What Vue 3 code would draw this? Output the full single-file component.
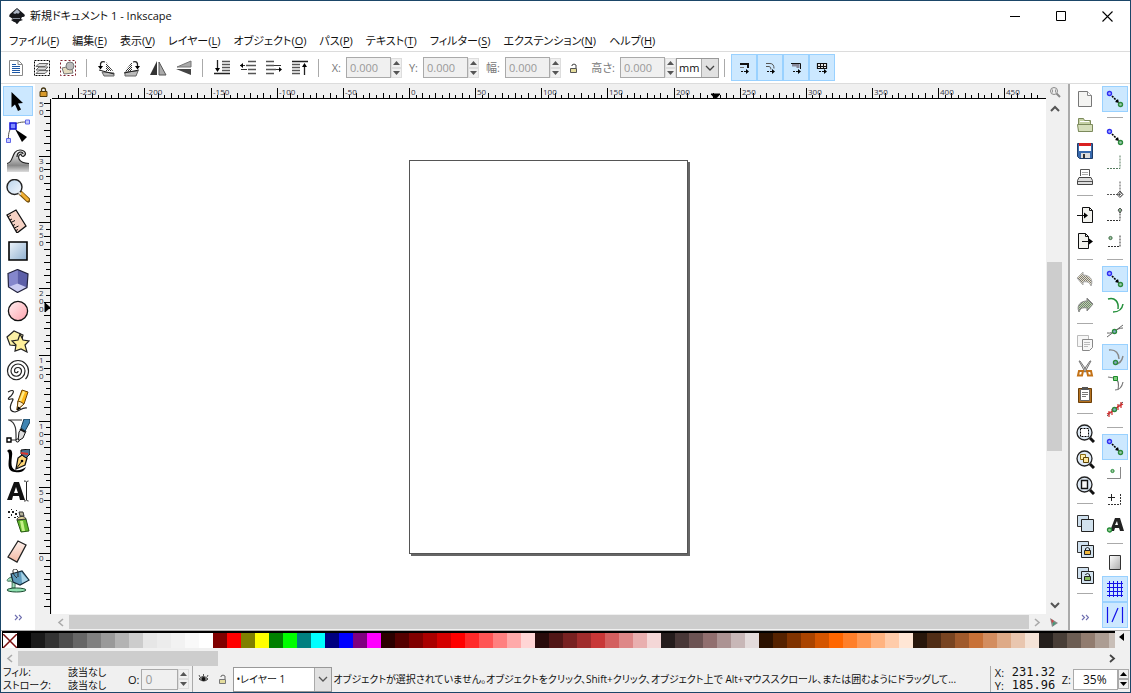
<script setup>
import { ref } from 'vue'

const menus = [
  ['ファイル', 'F'], ['編集', 'E'], ['表示', 'V'], ['レイヤー', 'L'], ['オブジェクト', 'O'],
  ['パス', 'P'], ['テキスト', 'T'], ['フィルター', 'S'], ['エクステンション', 'N'], ['ヘルプ', 'H']
]

// Shapes shared by several icons
const lens = '<path d="M15 15l4 4" stroke="#111" stroke-width="3"/><circle cx="9.5" cy="9.5" r="7.5" fill="#dfeaf5" stroke="#222" stroke-width="1.3"/>'
const twoPanes = '<path d="M2.5 2.5h11v11h-11z" fill="#cfe0ee" stroke="#333"/><path d="M6.5 6.5h12v12h-12z" fill="#d2e2ee" stroke="#222"/>'
const toggleArrow = '<path d="M6 12.5h2m1 0h3" stroke="#111"/><path d="M11 10l3 2.5-3 2.5z"/>'

const icons = {
  selector: '<path d="M5.5 3v15.5l3.5-3 3 6.5 3-1.5-3-6 5-.5z"/>',
  node: '<path d="M2.5 20C2 14 4 9 7 7c4-4 9-4 14-4" fill="none" stroke="#555"/><path d="M9 10l12 8-5 5z"/><path d="M4 4h6v6H4z" fill="#7f8cff" stroke="#1010d8" stroke-width="1.5"/><path d="M19.5 1h4v4h-4zM.5 19.5h4v4h-4z" fill="#c3c9ff" stroke="#6066e8"/>',
  tweak: '<path d="M1 15C8 15 5 1 14 1c6 0 7 4 4 6-1.5 1-3 0-3-2-4 1-3 10 8 10v8H1z" fill="url(#grayGrad)"/><path d="M1 14.5C8 14.5 5 1 14 1c5 0 7 4 4 6-1.5 1-3 0-3-2-4 1-4 9 8 9.5M11 8c0-6 6-6 6-3" fill="none" stroke="#222" stroke-width="1.2"/>',
  zoom: '<path d="M15 14.5l7 6.5" stroke="#7a5410" stroke-width="5" stroke-linecap="round"/><path d="M15.5 14.5l6 6" stroke="#f2b032" stroke-width="3" stroke-linecap="round"/><circle cx="8.5" cy="8" r="7.5" fill="url(#glass)" stroke="#222" stroke-width="1.4"/><path d="M12.5 13l2.5 2.5" stroke="#ddd" stroke-width="2"/>',
  measure: '<path d="M1 6l9-5 10 16-9 7z" fill="#f6d2c4" stroke="#111" stroke-width="1.3"/><path d="M2 8l3-2M4 11l2-1M5 13.5l4-2M7 16.5l2-1M8.5 19l4-2M10 21.5l2-1" stroke="#111"/>',
  rect: '<path d="M3 3h18v18H3z" fill="url(#blueGrad)" stroke="#000" stroke-width="1.6"/>',
  cube: '<path d="M2 4.5l9.5-4L22 5l-1 13.500-9.500 5L2.500 18z" fill="#c9cbf2"/><path d="M2 4.5l9.500-4v14l-9 3.500z" fill="#8487cc"/><path d="M11.500.5L22 5l-1 13.500-9.500-4z" fill="#5c5fa8"/><path d="M2 4.500l9.500-4L22 5l-1 13.500-9.500 5L2.500 18z" fill="none" stroke="#23243f" stroke-width="1.200"/>',
  ellipse: '<circle cx="12" cy="12" r="9.6" fill="url(#pinkGrad)" stroke="#111" stroke-width="1.3"/>',
  star: '<path d="M1 8l7-6 9 4-3 11-10-1z" fill="#fbf0a6" stroke="#222" stroke-width="1.2"/><path d="M14 5l3 6 6 1-4 4 2 7-6-3-6 2 1-6-4-4 6-1z" fill="#fff09a" stroke="#222" stroke-width="1.2"/>',
  spiral: '<path d="M12 12a1.75 1.75 0 0 1-3.5 0a3.5 3.5 0 0 1 7 0a5.25 5.25 0 0 1-10.5 0a7 7 0 0 1 14 0a8.75 8.75 0 0 1-17.5 0a10.5 10.5 0 0 1 21 0q0 5-3 8" fill="none" stroke="#222" stroke-width="1.2"/>',
  pencil: '<path d="M2 3c6-3 7-1 3 4-4 3-3 4 0 3 4-1 1 2 0 5-2 5 0 8 4 8 5-1 7-5 12-4" fill="none" stroke="#222" stroke-width="1.2"/><path d="M12 12L16 1l6 2-4 12-7 6z" fill="#ffb818" stroke="#6d4300"/><path d="M17 2l2 1-4 10-2-1z" fill="#ffec8a"/><path d="M12 12l3 1 3 2-7 6z" fill="#fff0cf" stroke="#6d4300"/><path d="M11 21.500l1-4 3 2z"/>',
  bezier: '<path d="M2 1h14M3 1c8 3 7 12 7 20H3" fill="none" stroke="#333" stroke-width="1.2"/><path d="M12 22l1-9 3-4 4 3-3 7z" fill="#ddd" stroke="#111"/><path d="M15 9l3-9h6v3l-5 9z" fill="#3f84b2" stroke="#173a52"/><path d="M14 10l5 3" stroke="#111" stroke-width="2"/><path d="M1 19h4v4H1z" fill="#fff" stroke="#000" stroke-width="1.4"/><circle cx="11.5" cy="21.5" r="1.5" fill="#fff" stroke="#000"/>',
  calligraphy: '<path d="M1 2c3-3 6-1 5 5-1 8-1 12 3 14 4 1 8-1 11-3-2 5-7 6-11 5-7-1-7-6-6-14 0-4 0-6-2-7z"/><path d="M10 20l2-11 4-3 5 3-2 7z" fill="#ffd777" stroke="#111" stroke-width="1.3"/><path d="M10 20l6-8" stroke="#111"/><circle cx="16" cy="12" r="1.3"/><path d="M15 1l9-1v5l-4 4-5-4z" fill="#4a7393" stroke="#111"/><path d="M15 4l7 1" stroke="#d9362d" stroke-width="2"/>',
  text: '<path d="M1 21L8 3h5l6 18h-5l-1-4H7l-1 4zM8 14h4l-2-6z" fill-rule="evenodd" fill="#111"/><path d="M18 2q2 0 2.5 1q.5-1 2-1M20.5 3v18M18 22q2 0 2.5-1q.5 1 2 1" fill="none" stroke="#222"/>',
  spray: '<path d="M11 11l9-1 3 12-8 1z" fill="#62b82e" stroke="#275a12"/><path d="M14 12h3l2 10h-3z" fill="#c5f088"/><path d="M11 11c0-4 8-5 9-1z" fill="#e1d39a" stroke="#333"/><path d="M13 3h4l1 4h-4z" fill="#b7b49b" stroke="#333"/><path d="M2 2h2v2H2zM5 5h1v2H5zM6 2h2v2H6zM9 4h2v2H9zM2 8h2v1H2zM8 8h2v1H8zM5 0h1v1H5zM10 1h1v1h-1zM11 7h1v1h-1z" fill="#222"/>',
  eraser: '<path d="M2 18L12 2l8 4-9 17z" fill="url(#peach)" stroke="#222" stroke-width="1.3"/>',
  bucket: '<path d="M5 8c-6 3-4 5-1 4 3 0 2 3 2 7h3c0-5 1-8-2-9z" fill="#9fdcbb" stroke="#3d6d54"/><path d="M5 5l11-3 7 9-9 5-7-3z" fill="#5e9abb" stroke="#172b38" stroke-width="1.2"/><path d="M15 3l7 8-6 3z" fill="#a8d3e7"/><path d="M11 9C6 5 6 0 9 0s3 3 3 8" fill="none" stroke="#222"/><ellipse cx="10.5" cy="21" rx="9.5" ry="2" fill="#8fe0b0" stroke="#1c4931"/>',

  selectAll: '<path d="M2.5 1.5h9l4 4v11h-13z" fill="#fff" stroke="#888"/><path d="M11 1.5v4h4" fill="none" stroke="#888"/><path d="M5 5.5h4M5 7.5h8M5 9.5h8M5 11.5h8M5 13.5h8" stroke="#1c57a5"/>',
  selectLayers: '<path d="M1.5 1.5h15v15h-15z" fill="none" stroke="#000" stroke-dasharray="2 1"/><path d="M6 11.5h9l-3 3H3zM6 8h9l-3 3H3zM6 4.500h9l-3 3H3z" fill="#ddd" stroke="#666"/>',
  deselect: '<path d="M1.5 1.5h15v15h-15z" fill="none" stroke="#7d1f2b" stroke-dasharray="2 2"/><path d="M3 9l9-2 2 7-9 1z" fill="#e5dcc0" stroke="#777"/><circle cx="11" cy="7" r="4" fill="#bbb" stroke="#777"/>',
  rotateLeft: '<path d="M9 3v9h7z" fill="url(#dither)"/><path d="M5 13l12 1v3H7z" fill="#bbb" stroke="#666"/><path d="M1 7h5l-2.5 3.5z"/><path d="M3.5 7C3 3 5 2 8 3" fill="none" stroke="#222" stroke-width="1.3"/><path d="M2 11l15 4" stroke="#222"/>',
  rotateRight: '<path d="M9 3v9H2z" fill="url(#dither)"/><path d="M2 13l13-1-2 5H2z" fill="#bbb" stroke="#666"/><path d="M12 7h5l-2.5 3.5z"/><path d="M10 3c3-1 5 0 4.5 4" fill="none" stroke="#222" stroke-width="1.3"/><path d="M1 14l15-3" stroke="#222"/>',
  flipH: '<path d="M8 2v14H1z" fill="#333"/><path d="M10 3v13h7z" fill="#aaa" stroke="#555"/>',
  flipV: '<path d="M2 8h14V2z" fill="#aaa" stroke="#777"/><path d="M1 10h15v6z" fill="#444"/>',
  bottom: '<path d="M4.5 1v10M1 14.5h16" stroke="#222" stroke-width="1.3"/><path d="M2 9h5l-2.5 4z"/><path d="M9 2.500h8M9 5.500h8M9 8.500h8M9 11.500h8" stroke="#555" stroke-width="1.5"/>',
  lower: '<path d="M9 2.5h8M7 6.5h10M9 10.5h8M9 14.5h8" stroke="#555" stroke-width="1.5"/><path d="M1 6.5h5M2 10.5h6" stroke="#333"/><path d="M4 4v5L1 6.5z"/>',
  raise: '<path d="M1 2.5h8M1 6.5h8M1 10.5h10M1 14.5h8" stroke="#555" stroke-width="1.5"/><path d="M9 6.5h7M11 10.5h5" stroke="#333"/><path d="M14 8v5l3-2.5z"/>',
  top: '<path d="M1 2.5h16M13.5 6v10" stroke="#222" stroke-width="1.3"/><path d="M11 8h5l-2.5-4z"/><path d="M1 5.5h8M1 8.5h8M1 11.5h8M1 14.5h8" stroke="#555" stroke-width="1.5"/>',
  scaleStroke: '<path d="M5 5h8v4" fill="none" stroke="#111" stroke-width="2"/><path d="M5 8.5h4" stroke="#777"/>' + toggleArrow,
  scaleCorner: '<path d="M5 4.5h4q4 0 4 5M5 7.5h3q2 0 2 3" fill="none" stroke="#555"/>' + toggleArrow,
  moveGradient: '<path d="M5 6h6v3" fill="none" stroke="#889" stroke-width="3"/><path d="M4 4.5h9.5V10" fill="none" stroke="#111"/>' + toggleArrow,
  movePattern: '<path d="M4.5 4.5h9v5h-9zM4 7.5h9M7.5 4v5M10.5 4v5" fill="#fff" stroke="#111" stroke-width="1.2"/>' + toggleArrow,

  docNew: '<path d="M3.5 2.5h9l4 4v11h-13z" fill="#f4f4f2" stroke="#777"/><path d="M12.5 2.5v4h4" fill="#fff" stroke="#888"/>',
  open: '<path d="M3.5 16.5v-13h5l1 2h6v11z" fill="#c5d1a4" stroke="#7c8a5c"/><path d="M5 6.5h9" stroke="#fff"/><path d="M2.500 9.500h15v7h-14z" fill="#d6dfbb" stroke="#7c8a5c"/>',
  save: '<path d="M2.5 2.5h15v15h-13l-2-2z" fill="#3769ad" stroke="#1e3c68"/><path d="M4 2h12v3H4z" fill="#d92020"/><path d="M4 5h12v5H4z" fill="#fff"/><path d="M6 12h9v5H6z" fill="#ddd"/><path d="M8 13h2v4H8z" fill="#333"/>',
  print: '<path d="M5.5 9V2.500h9V9" fill="#fff" stroke="#555"/><path d="M7 5.500h6M7 7.500h6" stroke="#aaa"/><path d="M4 10.500h12l1.500 3v4h-15v-4z" fill="#ddd" stroke="#444"/><path d="M3 14.500h14" stroke="#555"/>',
  importFile: '<path d="M7.5 2.5h7l3 3v12h-10z" fill="#f2f2ee" stroke="#111"/><path d="M14.5 2.5v3h3M2 10.5h8" fill="none" stroke="#111"/><path d="M9 7.5l4 3-4 3z"/>',
  exportFile: '<path d="M3.5 2.5h7l3 3v12h-10z" fill="#f2f2ee" stroke="#111"/><path d="M10.5 2.5v3h3M7 10.5h8" fill="none" stroke="#111"/><path d="M14 7.5l4 3-4 3z"/>',
  undo: '<path d="M2 9l6-6v3c6 0 11 4 8 11-1-3-3-5-8-4v3z" fill="#eae2c8"/><path d="M2 9l6-6v3c6 0 11 4 8 11-1-3-3-5-8-4v3z" fill="url(#ditherSoft)" stroke="#aaa"/>',
  redo: '<path d="M18 9l-6-6v3C6 6 1 10 4 17c1-3 3-5 8-4v3z" fill="#b9dda8"/><path d="M18 9l-6-6v3C6 6 1 10 4 17c1-3 3-5 8-4v3z" fill="url(#ditherSoft)" stroke="#888"/>',
  copy: '<path d="M2.5 2.5h11v11h-11z" fill="#f7f7f7" stroke="#bbb"/><path d="M7.5 6.5h10v8l-3 3h-7z" fill="#f7f7f7" stroke="#888"/><path d="M9 9.5h6M9 11.5h6M9 13.5h4" stroke="#bbb"/>',
  cut: '<path d="M4 2l1 0 7 10-2 1zM16 2l-1 0-7 10 2 1z" fill="#ddd" stroke="#777"/><path d="M4 12h4l-1 4.500H3zM12 12h4l1 4.500h-4z" fill="#fff" stroke="#c37217" stroke-width="2"/>',
  paste: '<path d="M3.5 3.5h13v14h-13z" fill="#b4711f" stroke="#6b3e08"/><path d="M5.5 4.5h9v11h-9z" fill="#fff" stroke="#666"/><path d="M7 2h6v3H7z" fill="#555"/><path d="M7 7.5h6M7 9.5h6M7 11.5h4" stroke="#777"/>',
  zoomSelection: lens + '<path d="M5.5 5.5h8v8h-8z" fill="#fff" stroke="#000" stroke-dasharray="2 1"/>',
  zoomDrawing: lens + '<path d="M5.500 5.500h5v5h-5z" fill="#fff0b0" stroke="#8a6a10"/><path d="M8.500 8.500h5v5h-5z" fill="#ffe69a" stroke="#5d4304"/>',
  zoomPage: lens + '<path d="M6.5 5.5h6v8h-6z" fill="#f6f6f6" stroke="#111" stroke-width="1.4"/>',
  duplicate: twoPanes,
  clone: twoPanes + '<path d="M10.500 12V9.500q2-2 4 0V12" fill="none" stroke="#222"/><path d="M9.500 11.500h6v4h-6z" fill="#f1b83c" stroke="#222"/>',
  unlink: twoPanes + '<path d="M10.5 10V9.500q2-2 4 0V12" fill="none" stroke="#222"/><path d="M9.500 11.500h6v4h-6z" fill="#86bb5a" stroke="#222"/>',

  snap: '<path d="M7 7l6 6" stroke="#000" stroke-width="1.6" stroke-dasharray="2 1"/><path d="M14 14l-4-1 3-3z"/><circle cx="4.5" cy="4.5" r="2" fill="#aab0ff" stroke="#3030f0" stroke-width="1.4"/><circle cx="15.5" cy="15.5" r="2" fill="#9ccbb0" stroke="#2c8a3c" stroke-width="1.4"/>',
  bboxSnap: '<path d="M2 15.5h13V2" fill="none" stroke="#567a5e" stroke-dasharray="2 1"/>',
  bboxEdge: '<path d="M2 15.5h13V2" fill="none" stroke="#555" stroke-dasharray="2 1"/><path d="M15 12l3 3.500-3 3-3-3z" fill="url(#ditherSoft)" stroke="#555"/>',
  bboxCorner: '<path d="M2 15.5h13V6" fill="none" stroke="#333" stroke-dasharray="2 1"/><path d="M15 3l2 2-2 3-2-3z" fill="#8bb391" stroke="#555"/>',
  bboxMid: '<path d="M3 15.5h12V4" fill="none" stroke="#333" stroke-dasharray="2 1"/><circle cx="5.5" cy="7" r="1.600" fill="#9cc5a0" stroke="#3c6a44"/>',
  pathSnap: '<path d="M3 4c7-2 11 3 10 10M18 9c-1 6-5 8-10 8" fill="none" stroke="#23903a" stroke-width="1.5"/>',
  intersect: '<path d="M2 16L18 4M2 12c7 1 9-5 16-5" fill="none" stroke="#666"/><circle cx="9.5" cy="10.5" r="2" fill="#8ac" stroke="#2c8a3c" stroke-width="1.4"/>',
  cusp: '<path d="M4 3c7-1 10 4 10 9M18 9c-1 5-4 8-8 8" fill="none" stroke="#888" stroke-width="1.4"/><circle cx="10.500" cy="15.500" r="2" fill="#8ac" stroke="#2c8a3c" stroke-width="1.400"/>',
  smooth: '<path d="M3 4l6 1c5 2 5 6 4 12M18 9c-1 5-4 8-8 8" fill="none" stroke="#777" stroke-width="1.2"/><path d="M8.500 3.500h4v4h-4z" fill="#7ccb7c" stroke="#1d8a2c"/>',
  midpoint: '<path d="M2 17L18 3" stroke="#555"/><path d="M4 12v6M7 10v6M13 5v6M16 3v6M2 15l6-3M11 9l7-4" stroke="#d32a2a" stroke-width="1.2"/><circle cx="9.5" cy="10.5" r="2" fill="#8ac" stroke="#2c8a3c" stroke-width="1.4"/>',
  objectCenter: '<path d="M2 15.500h13.500V4" fill="none" stroke="#888"/><circle cx="7.500" cy="8" r="1.600" fill="#9cc5a0" stroke="#238a35"/>',
  rotation: '<path d="M3 15.5h12.500V4" fill="none" stroke="#333" stroke-dasharray="2 1"/><path d="M6.500 5v7M3 8.500h7" stroke="#222"/>',
  textBase: '<path d="M5 16L10 3h5l4 13h-4l-1-3h-4l-1 3zM10 10h3l-1-4z" fill-rule="evenodd" fill="#222"/><circle cx="4.5" cy="15" r="2" fill="#9ad19a" stroke="#238a35" stroke-width="1.3"/>',
  pageBorder: '<path d="M4.5 2.5h11v14h-11z" fill="url(#grayGrad2)" stroke="#333"/>',
  grid: '<path d="M2 4.500h16M2 8.500h16M2 12.500h16M2 16.500h16M4.500 2v16M8.500 2v16M12.500 2v16M16.500 2v16" stroke="#1212e8"/>',
  guide: '<path d="M2.5 2v16M17.5 2v16M7 17l6-14" stroke="#1212e8" stroke-width="1.2"/>'
}

const tools = [
  ['selector', '選択'], ['node', 'ノード'], ['tweak', '微調整'], ['zoom', 'ズーム'], ['measure', '計測'],
  ['rect', '矩形'], ['cube', '3D ボックス'], ['ellipse', '円/弧'], ['star', '星形'], ['spiral', 'らせん'],
  ['pencil', '鉛筆'], ['bezier', 'ペン'], ['calligraphy', 'カリグラフィ'], ['text', 'テキスト'],
  ['spray', 'スプレー'], ['eraser', '消しゴム'], ['bucket', 'バケツ']
]
const activeTool = ref('selector')

const actions = [
  ['selectAll', 'selectLayers', 'deselect'],
  ['rotateLeft', 'rotateRight', 'flipH', 'flipV'],
  ['bottom', 'lower', 'raise', 'top']
]
const toggles = ['scaleStroke', 'scaleCorner', 'moveGradient', 'movePattern']

const commands = [
  ['docNew', 'open', 'save', 'print'], ['importFile', 'exportFile'], ['undo', 'redo'],
  ['copy', 'cut', 'paste'], ['zoomSelection', 'zoomDrawing', 'zoomPage'], ['duplicate', 'clone', 'unlink']
]
const snaps = [
  [['snap', 1]],
  [['snap'], ['bboxSnap'], ['bboxEdge'], ['bboxCorner'], ['bboxMid']],
  [['snap', 1], ['pathSnap'], ['intersect'], ['cusp', 1], ['smooth'], ['midpoint']],
  [['snap', 1], ['objectCenter'], ['rotation'], ['textBase']],
  [['pageBorder'], ['grid', 1], ['guide', 1]]
]

const swatches = (
  '000000 1a1a1a 333333 4d4d4d 666666 808080 999999 b3b3b3 cccccc e6e6e6 ececec f2f2f2 f9f9f9 ffffff ' +
  '800000 ff0000 808000 ffff00 008000 00ff00 008080 00ffff 000080 0000ff 800080 ff00ff ' +
  '2b0000 550000 800000 aa0000 d40000 ff0000 ff2a2a ff5555 ff8080 ffaaaa ffd5d5 ' +
  '280b0b 501616 782121 a02c2c c83737 d35f5f de8787 e9afaf f4d7d7 ' +
  '241c1c 483737 6c5353 916f6f ac9393 c8b7b7 e3dbdb ' +
  '2b1100 552200 803300 aa4400 d45500 ff6600 ff7f2a ff9955 ffb380 ffccaa ffe6d5 ' +
  '28170b 502d16 784421 a05a2c c87137 d38d5f deaa87 e9c6af f4e3d7 ' +
  '241f1c 483e37 6c5d53 917c6f ac9d93 c8beb7'
).split(' ').map(c => '#' + c)

// Rulers: one tick every 5 mm, a label every 50 mm.
const scale = 66.14 / 50
function ticks(from, to, pos) {
  const out = []
  for (let v = from; v <= to; v += 5) {
    out.push({ v, at: Math.round(pos(v)), kind: v % 50 === 0 ? 2 : v % 10 === 0 ? 1 : 0 })
  }
  return out
}
const hTicks = ticks(-265, 475, v => 357 + v * scale)
const vTicks = ticks(-40, 340, v => 454 - v * scale)
const tickLength = [4, 6, 11]

const fields = [['x', 'X:'], ['y', 'Y:'], ['w', '幅:'], ['h', '高さ:']]
</script>

<template>
  <div class="window">
    <svg class="defs" aria-hidden="true">
      <defs>
        <pattern id="dither" width="2" height="2" patternUnits="userSpaceOnUse"><path d="M0 0h1v1H0zM1 1h1v1H1z" fill="#333" /></pattern>
        <pattern id="ditherSoft" width="2" height="2" patternUnits="userSpaceOnUse"><path d="M0 0h1v1H0zM1 1h1v1H1z" fill="#777" /></pattern>
        <linearGradient id="grayGrad" x2="0" y2="1"><stop offset="0" stop-color="#fff" /><stop offset=".7" stop-color="#888" /><stop offset="1" stop-color="#ddd" /></linearGradient>
        <linearGradient id="grayGrad2" x2="1" y2="1"><stop offset="0" stop-color="#fff" /><stop offset="1" stop-color="#aaa" /></linearGradient>
        <linearGradient id="blueGrad" x2="1" y2="1"><stop offset="0" stop-color="#eef4fa" /><stop offset="1" stop-color="#8fb0d0" /></linearGradient>
        <linearGradient id="glass" x2="1" y2="1"><stop offset="0" stop-color="#b9d3ea" /><stop offset="1" stop-color="#f6faff" /></linearGradient>
        <linearGradient id="pinkGrad" x2="1" y2="1"><stop offset="0" stop-color="#fff0f1" /><stop offset="1" stop-color="#ffa3ad" /></linearGradient>
        <linearGradient id="peach" x2="0" y2="1"><stop offset="0" stop-color="#fff3ee" /><stop offset="1" stop-color="#f3b8a2" /></linearGradient>
      </defs>
    </svg>

    <header class="titlebar">
      <svg class="logo" width="16" height="16" viewBox="0 0 16 16" aria-hidden="true">
        <path d="M8 0l7 6c2 2 0 3-2 3l-1 2 2 1-3 1c-1 0-2 3-3 3s-1-2-3-2l-3-2 2-1-3-2C0 9 0 7 1 6z" fill="#16181c" />
        <path d="M8 1l3 3-2 2-1-1-2 1-2-1z" fill="#aeb7c6" />
        <path d="M4 10.500h7" stroke="#8b93a0" />
      </svg>
      <h1>新規ドキュメント 1 - Inkscape</h1>
      <button class="win" aria-label="最小化"><svg width="11" height="11"><path d="M0 5.500h10" stroke="#000" /></svg></button>
      <button class="win" aria-label="最大化"><svg width="11" height="11"><path d="M.5.5h9v9h-9z" fill="none" stroke="#000" /></svg></button>
      <button class="win" aria-label="閉じる"><svg width="11" height="11"><path d="M.5.5l10 10M10.500.5l-10 10" stroke="#000" stroke-width="1.100" /></svg></button>
    </header>

    <nav class="menubar">
      <button v-for="m in menus" :key="m[1]">{{ m[0] }}(<u>{{ m[1] }}</u>)</button>
    </nav>

    <div class="toolbar">
      <template v-for="(group, i) in actions" :key="i">
        <button v-for="a in group" :key="a" class="tool26" :aria-label="a">
          <svg width="18" height="18" viewBox="0 0 18 18" v-html="icons[a]"></svg>
        </button>
        <span class="vsep"></span>
      </template>
      <template v-for="f in fields" :key="f[0]">
        <button v-if="f[0] === 'h'" class="lock" aria-label="縦横比を固定">
          <svg width="10" height="12" viewBox="0 0 10 12"><path d="M3 4V3q2-2 4 0v3" fill="none" stroke="#444" /><path d="M1.500 6.500h6v4h-6z" fill="#e4dc9c" stroke="#555" /></svg>
        </button>
        <label :for="f[0]">{{ f[1] }}</label>
        <span class="spin">
          <input :id="f[0]" value="0.000" disabled>
          <span class="steps">
            <button disabled aria-label="増やす"><svg width="7" height="4"><path d="M0 4l3.500-4L7 4z" /></svg></button>
            <button disabled aria-label="減らす"><svg width="7" height="4"><path d="M0 0l3.500 4L7 0z" /></svg></button>
          </span>
        </span>
      </template>
      <span class="select unit">
        <select aria-label="単位"><option>mm</option></select>
        <svg width="10" height="6"><path d="M1 1l4 4 4-4" fill="none" stroke="#444" stroke-width="1.300" /></svg>
      </span>
      <span class="vsep"></span>
      <button v-for="t in toggles" :key="t" class="tool26 on" :aria-label="t">
        <svg width="18" height="18" viewBox="0 0 18 18" v-html="icons[t]"></svg>
      </button>
    </div>

    <main>
      <aside class="toolbox">
        <button v-for="t in tools" :key="t[0]" :class="{ on: activeTool === t[0] }" :aria-label="t[1]" @click="activeTool = t[0]">
          <svg width="24" height="24" viewBox="0 0 24 24" v-html="icons[t[0]]"></svg>
        </button>
        <button class="more" aria-label="その他のツール"><svg width="8" height="7"><path d="M1 1l2.500 2.500L1 6M5 1l2.500 2.500L5 6" fill="none" stroke="#7070b0" stroke-width="1.200" /></svg></button>
      </aside>

      <section class="editor">
        <button class="corner" aria-label="ガイドをロック">
          <svg width="9" height="10"><path d="M2.500 5V3q0-2 2-2t2 2v2" fill="none" stroke="#443510" stroke-width="1.300" /><path d="M1 4.500h7v5H1z" fill="#d99a2b" stroke="#513b0c" /></svg>
        </button>
        <svg class="hruler">
          <path v-for="t in hTicks" :key="t.v" :d="`M${t.at + 0.5} 15v-${tickLength[t.kind]}`" />
          <path class="axis" d="M0 14.500h4000" />
          <template v-for="t in hTicks" :key="t.v">
            <text v-if="t.kind === 2" :x="t.at + 2" y="11">{{ t.v }}</text>
          </template>
          <path class="marker" d="M659 10h9l-4.500 5z" />
        </svg>
        <div class="top-right"><svg width="12" height="12"><path d="M7 7l4 4" stroke="#888" stroke-width="2" /><circle cx="5" cy="5" r="3.500" fill="#eee" stroke="#888" /><path d="M3.500 3.500v3M6.500 3.500v3" stroke="#999" /></svg></div>

        <svg class="vruler">
          <path v-for="t in vTicks" :key="t.v" :d="`M15 ${t.at + 0.5}h-${tickLength[t.kind]}`" />
          <path class="axis" d="M15.500 0v4000" />
          <template v-for="t in vTicks" :key="t.v">
            <template v-if="t.kind === 2">
              <text v-for="(d, i) in String(t.v)" :key="i" x="4" :y="t.at + 8 + i * 8">{{ d }}</text>
            </template>
          </template>
          <text x="4" y="8">5</text><text x="4" y="16">0</text>
          <path class="marker" d="M10 204v9l5-4.500z" />
        </svg>
        <div class="canvas"><div class="page"></div></div>
        <div class="vscroll">
          <button aria-label="上へ"><svg width="10" height="7"><path d="M1 6l4-4 4 4" fill="none" stroke="#555" stroke-width="2" /></svg></button>
          <span class="gap-a"></span><span class="thumb"></span><span class="gap-b"></span>
          <button aria-label="下へ"><svg width="10" height="7"><path d="M1 1l4 4 4-4" fill="none" stroke="#555" stroke-width="2" /></svg></button>
        </div>

        <div class="corner"></div>
        <div class="hscroll">
          <button aria-label="左へ"><svg width="7" height="9"><path d="M6 1L2 4.500 6 8" fill="none" stroke="#aaa" stroke-width="1.600" /></svg></button>
          <span class="thumb"></span>
          <button aria-label="右へ"><svg width="7" height="9"><path d="M1 1l4 3.500L1 8" fill="none" stroke="#aaa" stroke-width="1.600" /></svg></button>
        </div>
        <div class="cms"><svg width="9" height="9"><path d="M1 0l8 5-6 4z" fill="#888" /><path d="M2 1l3 2-2 2z" fill="#c44" /><path d="M4 4l3 1-3 3z" fill="#497" /></svg></div>
      </section>

      <aside class="side commands">
        <template v-for="(group, i) in commands" :key="i">
          <button v-for="c in group" :key="c" :aria-label="c"><svg width="20" height="20" viewBox="0 0 20 20" v-html="icons[c]"></svg></button>
          <span class="hsep"></span>
        </template>
        <button class="more" aria-label="その他のコマンド"><svg width="8" height="7"><path d="M1 1l2.500 2.500L1 6M5 1l2.500 2.500L5 6" fill="none" stroke="#7070b0" stroke-width="1.200" /></svg></button>
      </aside>
      <aside class="side snaps">
        <template v-for="(group, i) in snaps" :key="i">
          <span v-if="i" class="hsep"></span>
          <button v-for="(s, j) in group" :key="j" :class="{ on: s[1] }" :aria-label="s[0]"><svg width="20" height="20" viewBox="0 0 20 20" v-html="icons[s[0]]"></svg></button>
        </template>
      </aside>
    </main>

    <div class="palette">
      <div class="swatches">
        <button class="none" aria-label="なし"><svg width="14" height="14"><path d="M0 0l14 14M14 0L0 14" stroke="#7a1010" stroke-width="1.500" /></svg></button>
        <button v-for="(c, i) in swatches" :key="i" :style="{ background: c }" :aria-label="c"></button>
      </div>
      <button class="pal-menu" aria-label="パレット"><svg width="5" height="8"><path d="M5 0v8L0 4z" /></svg></button>
    </div>
    <div class="pscroll">
      <button aria-label="左へ"><svg width="7" height="9"><path d="M6 1L2 4.500 6 8" fill="none" stroke="#aaa" stroke-width="1.600" /></svg></button>
      <span class="thumb"></span>
      <button aria-label="右へ"><svg width="7" height="9"><path d="M1 1l4 3.500L1 8" fill="none" stroke="#444" stroke-width="1.800" /></svg></button>
    </div>

    <footer class="status">
      <dl class="style">
        <dt>フィル:</dt><dd>該当なし</dd>
        <dt>ストローク:</dt><dd>該当なし</dd>
      </dl>
      <label for="opacity">O:</label>
      <span class="spin small">
        <input id="opacity" value="0" disabled>
        <span class="steps">
          <button disabled aria-label="増やす"><svg width="7" height="4"><path d="M0 4l3.500-4L7 4z" /></svg></button>
          <button disabled aria-label="減らす"><svg width="7" height="4"><path d="M0 0l3.500 4L7 0z" /></svg></button>
        </span>
      </span>
      <span class="ssep"></span>
      <button class="eye" aria-label="レイヤーの表示"><svg width="11" height="10"><path d="M1 5q4-5 9 0-4 4-9 0z" fill="#999" stroke="#444" /><circle cx="5.500" cy="5" r="2" fill="#111" /><path d="M2 3L1 1M5.500 2V0M9 3l1-2" stroke="#555" /></svg></button>
      <button class="eye" aria-label="レイヤーのロック"><svg width="10" height="12" viewBox="0 0 10 12"><path d="M3 4V3q2-2 4 0v3" fill="none" stroke="#666" /><path d="M1.500 6.500h6v4h-6z" fill="#e4dc9c" stroke="#777" /></svg></button>
      <span class="select layer">
        <select aria-label="レイヤー"><option>•レイヤー 1</option></select>
        <svg width="10" height="6"><path d="M1 1l4 4 4-4" fill="none" stroke="#555" stroke-width="1.300" /></svg>
      </span>
      <p>オブジェクトが選択されていません。オブジェクトをクリック、Shift+クリック、オブジェクト上で Alt+マウススクロール、または囲むようにドラッグして...</p>
      <dl class="coords">
        <dt>X:</dt><dd>231.32</dd>
        <dt>Y:</dt><dd>185.96</dd>
      </dl>
      <label for="zoom">Z:</label>
      <span class="spin zoom">
        <input id="zoom" value="35%">
        <span class="steps">
          <button aria-label="拡大"><svg width="7" height="4"><path d="M0 4l3.500-4L7 4z" /></svg></button>
          <button aria-label="縮小"><svg width="7" height="4"><path d="M0 0l3.500 4L7 0z" /></svg></button>
        </span>
      </span>
    </footer>
  </div>
</template>

<style>
body { margin: 0; }
</style>

<style scoped>
* { box-sizing: border-box; }
.window {
  display: flex;
  flex-direction: column;
  min-height: 100vh;
  border: 1px solid #1b4668;
  background: #fff;
  color: #111;
  font-family: "Open Sans", "Noto Sans CJK JP", sans-serif;
  font-size: 11px;
  line-height: 16px;
  font-feature-settings: "palt";
}
.defs { position: absolute; width: 0; height: 0; }
button { display: flex; align-items: center; justify-content: center; flex: none; padding: 0; border: 0; background: none; color: inherit; font: inherit; font-feature-settings: inherit; }
input, select { font: inherit; font-feature-settings: inherit; color: inherit; }
svg { display: block; flex: none; }

.titlebar { display: flex; align-items: center; height: 30px; padding-left: 8px; }
.logo { margin-right: 5px; }
h1 { flex: 1; margin: 0; font-size: 11px; font-weight: 400; }
.win { width: 46px; height: 30px; }

.menubar { display: flex; height: 21px; padding-left: 8px; gap: 13px; border-bottom: 1px solid #dcdcdc; }
.menubar u { text-underline-offset: 2px; }

.toolbar { display: flex; align-items: center; height: 32px; padding-left: 2px; border-bottom: 1px solid #dcdcdc; }
.tool26 { width: 26px; height: 27px; }
.on { background: #cce8ff; border: 1px solid #99d1ff; }
.vsep { flex: none; width: 1px; height: 18px; margin: 0 6px 0 5px; background: #aaa; }
.toolbar label { width: 16px; margin-right: 5px; color: #777; text-align: right; white-space: nowrap; }
.toolbar label[for="w"] { width: 21px; }
.toolbar label[for="h"] { width: 28px; }
.lock { width: 26px; }
.spin { display: flex; flex: none; align-items: center; height: 21px; }
.spin input { width: 45px; height: 21px; padding: 0 3px; border: 1px solid #aaa; background: #f0f0f0; color: #999; }
.steps { display: flex; flex-direction: column; }
.steps button { width: 11px; height: 10px; border: 1px solid #ddd; background: #f0f0f0; fill: #555; }
.select { position: relative; display: flex; flex: none; border: 1px solid #999; background: #fff; }
.select select { width: 100%; padding: 0 2px; border: 0; background: linear-gradient(#aaa, #aaa) right 16px top / 1px 100% no-repeat, linear-gradient(#e1e1e1, #e1e1e1) right / 16px 100% no-repeat; appearance: none; outline: none; }
.select svg { position: absolute; right: 3px; top: 50%; margin-top: -3px; pointer-events: none; }
.unit { width: 43px; height: 20px; }

main { display: flex; flex: 1; }
.toolbox { display: flex; flex-direction: column; align-items: center; width: 34px; padding-top: 2px; }
.toolbox button { width: 30px; height: 30px; }
.toolbox .more { height: 34px; padding-top: 8px; }

.editor { display: grid; flex: 1; grid-template: 15px 1fr 16px / 17px 1fr 22px; min-width: 0; background: #f0f0f0; }
.hruler, .vruler { width: 100%; height: 100%; overflow: hidden; stroke: #000; font-size: 8px; }
.hruler text, .vruler text { stroke: none; fill: #334; }
.marker { fill: #000; }
.top-right { display: flex; align-items: center; padding-left: 3px; }
.canvas { position: relative; background: #fff; overflow: hidden; }
.page { position: absolute; left: 357px; top: 61px; width: 279px; height: 394px; border: 1px solid #555; box-shadow: 2px 2px 0 #666; }
.vscroll { display: flex; flex-direction: column; width: 15px; margin-left: 1px; }
.vscroll button { height: 18px; }
.vscroll .gap-a { flex: 145; }
.vscroll .thumb { flex: 189; }
.vscroll .gap-b { flex: 145; }
.thumb { background: #cdcdcd; }
.hscroll { display: flex; padding: 1px 0; }
.hscroll button, .pscroll button { width: 17px; }
.hscroll .thumb { flex: 1; }
.cms { display: flex; align-items: center; padding-left: 3px; }

.side { display: flex; flex-direction: column; align-items: center; width: 30px; padding-top: 2px; }
.side button { width: 26px; height: 26px; }
.side .more { height: 30px; padding-top: 4px; }
.commands { width: 32px; border-left: 2px solid #aaa; }
.hsep { width: 16px; height: 1px; margin: 5px 0 6px; background: #aaa; }

.palette { display: flex; height: 21px; padding: 0 6px 0 1px; border-top: 1px solid #aaa; background: #f0f0f0; }
.swatches { display: flex; flex: 1; height: 17px; border: solid #000; border-width: 2px 0 0 1px; overflow: hidden; margin-right: 4px; }
.swatches button { width: 14px; height: 15px; }
.swatches .none { background: #fff; }
.pal-menu { height: 12px; }
.pscroll { display: flex; justify-content: space-between; height: 15px; background: #f0f0f0; }
.pscroll .thumb { width: 200px; margin-right: auto; }
.pscroll button:last-child { width: 36px; }

.status { display: flex; align-items: center; height: 26px; background: #f0f0f0; font-size: 10px; line-height: 13px; white-space: nowrap; }
.status dl { display: grid; flex: none; margin: 0; }
.status dd { margin: 0; }
.style { grid-template-columns: 65px 60px; padding-left: 2px; }
.status label { margin-right: 2px; font-size: 11px; }
.small { font-size: 12px; }
.small input { width: 37px; }
.ssep { flex: none; width: 1px; height: 26px; margin-left: 3px; background: #aaa; }
.eye { width: 20px; }
.layer { width: 99px; height: 25px; }
.status p { flex: 1; min-width: 0; margin: 0 4px 0 1px; overflow: hidden; }
.coords { grid-template-columns: 17px 50px; padding-left: 4px; border-left: 1px solid #aaa; font-size: 11px; }
.coords dd { font-family: "DejaVu Sans Mono", monospace; font-size: 12px; }
.zoom input { width: 45px; padding-left: 9px; background: #fff; color: #111; font-size: 12px; }
.zoom .steps button { border-color: #aaa; fill: #000; }
.zoom { padding-right: 1px; }
</style>
